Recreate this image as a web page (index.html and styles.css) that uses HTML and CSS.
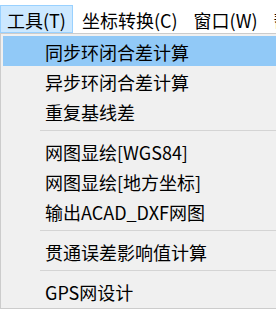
FILE: index.html
```
<!DOCTYPE html>
<html lang="zh-CN">
<head>
  <meta charset="UTF-8" />
  <title>工具菜单</title>
  <link rel="stylesheet" href="styles.css">
</head>
<body>
  <div class="menubar">
    <div class="menubar-item active">工具(T)</div>
    <div class="menubar-item">坐标转换(C)</div>
    <div class="menubar-item">窗口(W)</div>
    <div class="menubar-item">帮助(H)</div>
  </div>

  <div class="popup">
    <div class="menu-item selected">同步环闭合差计算</div>
    <div class="menu-item">异步环闭合差计算</div>
    <div class="menu-item">重复基线差</div>
    <div class="separator"></div>
    <div class="menu-item">网图显绘[WGS84]</div>
    <div class="menu-item">网图显绘[地方坐标]</div>
    <div class="menu-item">输出ACAD_DXF网图</div>
    <div class="separator"></div>
    <div class="menu-item">贯通误差影响值计算</div>
    <div class="separator"></div>
    <div class="menu-item">GPS网设计</div>
  </div>
</body>
</html>
```

FILE: styles.css
```
body {
  margin: 0;
  background: #fff;
  font-family: "Noto Sans CJK SC", "Noto Sans", sans-serif;
  font-size: 18px;
  color: #000;
  width: 276px;
  height: 309px;
  overflow: hidden;
}
.menubar {
  display: flex;
  align-items: flex-end;
  height: 33px;
  white-space: nowrap;
}
.menubar-item {
  height: 26px;
  line-height: 28px;
  padding: 0 6px;
  border: 1px solid transparent;
}
.menubar-item + .menubar-item {
  margin-left: 2px;
}
.menubar-item.active {
  background: #cce8ff;
  border-color: #99d1ff;
}
.popup {
  width: 320px;
  padding: 2px;
  background: #f0f0f0;
  border: 1px solid #cccccc;
  white-space: nowrap;
}
.menu-item {
  height: 30px;
  line-height: 32px;
  padding-left: 42px;
}
.menu-item.selected {
  background: #91c9f7;
}
.separator {
  height: 1px;
  margin: 4px 0 5px 37px;
  background: #d4d4d4;
}
```
